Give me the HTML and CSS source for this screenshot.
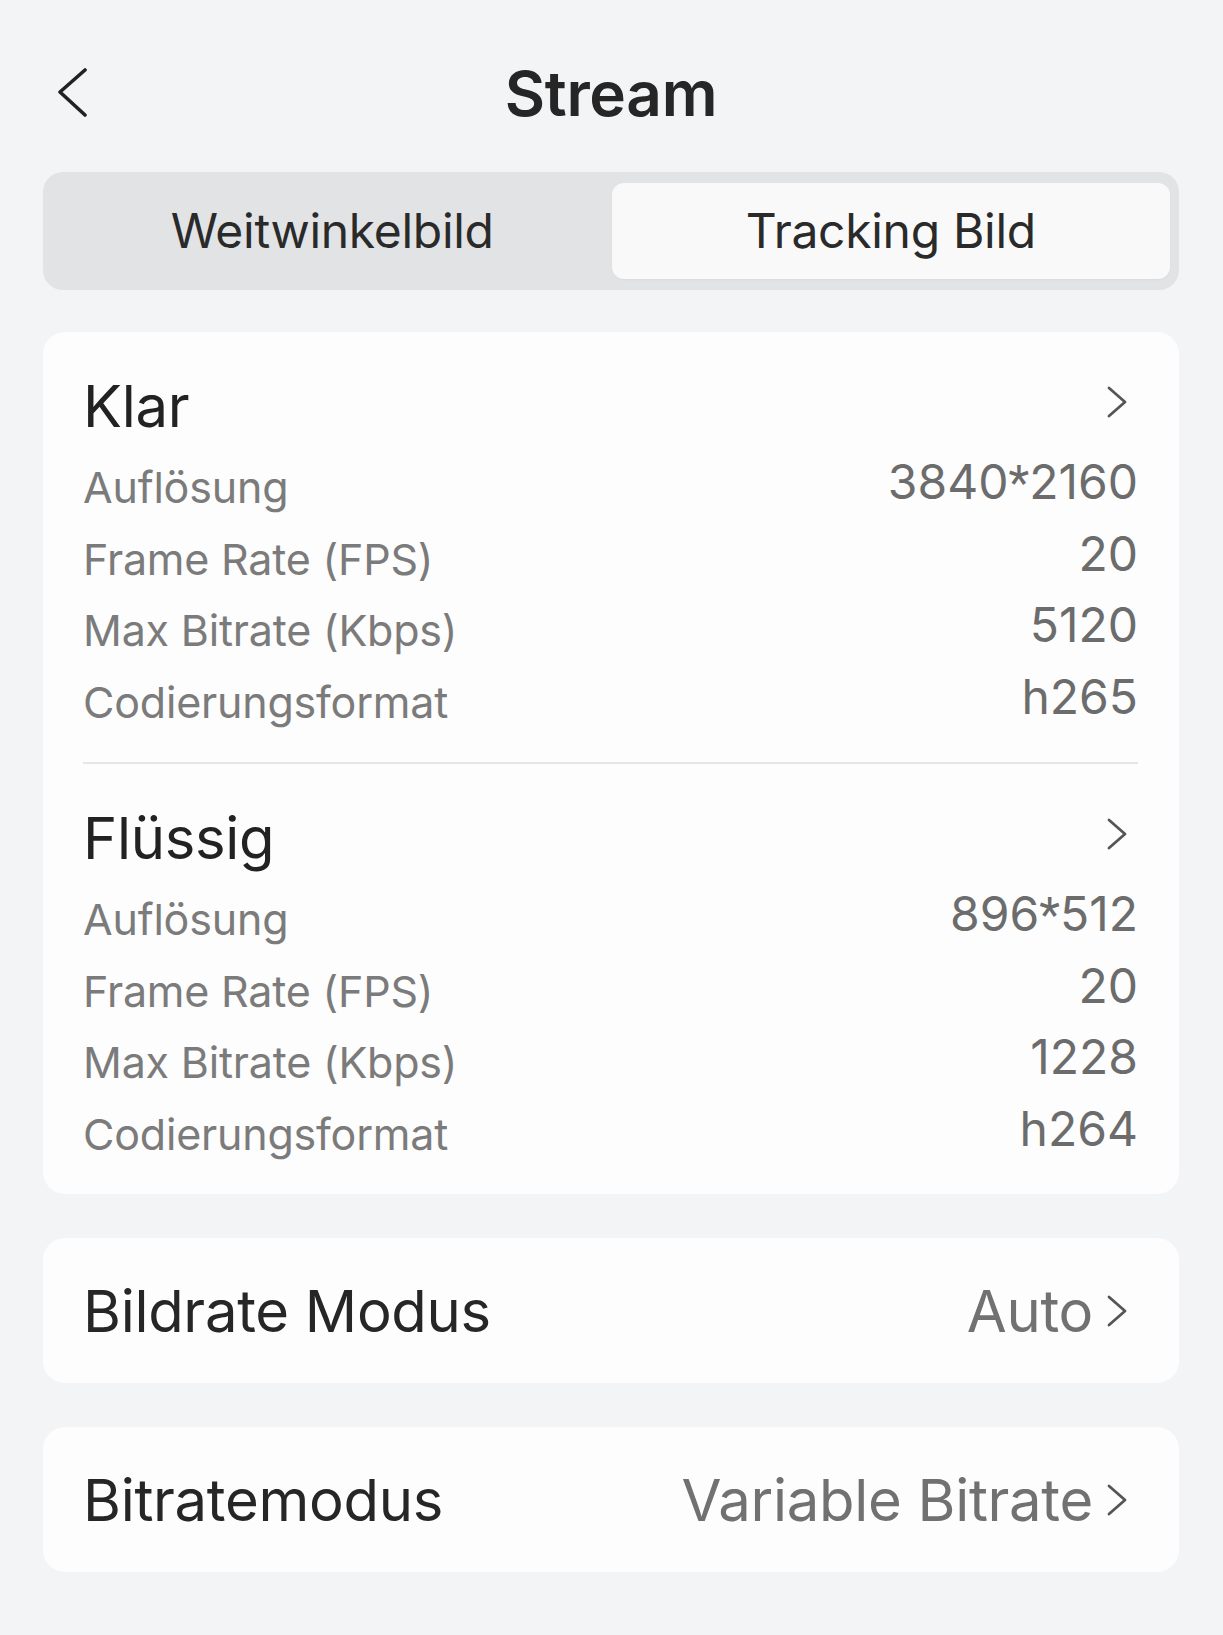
FILE: index.html
```html
<!DOCTYPE html>
<html lang="de">
<head>
  <meta charset="UTF-8">
  <title>Stream</title>
  <meta name="viewport" content="width=device-width, initial-scale=1.0">
  <link rel="stylesheet" href="styles.css">
</head>
<body>
  <!-- Header -->
  <div class="header">
    <button class="backBtn" aria-label="Zurück">
      <svg width="30" height="50" viewBox="0 0 30 50"><path d="M27 2 L2 24 L27 47" fill="none" stroke="#222" stroke-width="3.6" stroke-linecap="round" stroke-linejoin="round"/></svg>
    </button>
    <h1 class="title">Stream</h1>
  </div>

  <!-- Segmented control -->
  <div class="segmented">
    <div class="segment">Weitwinkelbild</div>
    <div class="segment active">Tracking Bild</div>
  </div>

  <!-- Stream profiles -->
  <div class="card">
    <div class="section">
      <div class="sectionHead">
        <span class="sectionTitle">Klar</span>
        <svg class="chevron" width="20" height="32" viewBox="0 0 20 32"><path d="M2 2 L18 16 L2 30" fill="none" stroke="#555" stroke-width="2.8" stroke-linecap="round" stroke-linejoin="round"/></svg>
      </div>
      <div class="row"><span class="label">Auflösung</span><span class="value">3840<span class="star">*</span>2160</span></div>
      <div class="row"><span class="label">Frame Rate (FPS)</span><span class="value">20</span></div>
      <div class="row"><span class="label">Max Bitrate (Kbps)</span><span class="value">5120</span></div>
      <div class="row"><span class="label">Codierungsformat</span><span class="value">h265</span></div>
    </div>
    <div class="divider"></div>
    <div class="section">
      <div class="sectionHead">
        <span class="sectionTitle">Flüssig</span>
        <svg class="chevron" width="20" height="32" viewBox="0 0 20 32"><path d="M2 2 L18 16 L2 30" fill="none" stroke="#555" stroke-width="2.8" stroke-linecap="round" stroke-linejoin="round"/></svg>
      </div>
      <div class="row"><span class="label">Auflösung</span><span class="value">896<span class="star">*</span>512</span></div>
      <div class="row"><span class="label">Frame Rate (FPS)</span><span class="value">20</span></div>
      <div class="row"><span class="label">Max Bitrate (Kbps)</span><span class="value">1228</span></div>
      <div class="row"><span class="label">Codierungsformat</span><span class="value">h264</span></div>
    </div>
  </div>

  <!-- Modes -->
  <div class="card optionCard">
    <span class="optionName">Bildrate Modus</span>
    <span class="optionValue">Auto</span>
    <svg class="chevron" width="20" height="32" viewBox="0 0 20 32"><path d="M2 2 L18 16 L2 30" fill="none" stroke="#555" stroke-width="2.8" stroke-linecap="round" stroke-linejoin="round"/></svg>
  </div>

  <div class="card optionCard">
    <span class="optionName">Bitratemodus</span>
    <span class="optionValue">Variable Bitrate</span>
    <svg class="chevron" width="20" height="32" viewBox="0 0 20 32"><path d="M2 2 L18 16 L2 30" fill="none" stroke="#555" stroke-width="2.8" stroke-linecap="round" stroke-linejoin="round"/></svg>
  </div>
</body>
</html>
```

FILE: styles.css
```css
/* Base */
body {
  margin: 0;
  padding: 0 44px 60px 43px;
  background: #f3f4f6;
  font-family: Inter, "Noto Sans", sans-serif;
  color: #222;
}

/* Header */
.header {
  position: relative;
  height: 80px;
  padding-top: 54px;
  margin-bottom: 38px;
  display: flex;
  align-items: center;
  justify-content: center;
}
.backBtn {
  position: absolute;
  left: 15px;
  top: 68px;
  padding: 0;
  border: none;
  background: none;
  cursor: pointer;
}
.backBtn svg { display: block; }
.title {
  margin: 0;
  font-size: 62px;
  font-weight: 600;
  line-height: 80px;
  letter-spacing: -0.3px;
  color: #262626;
}

/* Segmented control */
.segmented {
  display: grid;
  grid-template-columns: 1fr 1fr;
  height: 96px;
  padding: 11px 9px 11px 10px;
  background: #e2e3e5;
  border-radius: 20px;
  margin-bottom: 42px;
}
.segment {
  text-align: center;
  font-size: 48px;
  line-height: 96px;
  letter-spacing: -0.3px;
  color: #2a2a2a;
  border-radius: 12px;
}
.segment.active {
  background: #f9f9f9;
  box-shadow: 0 1px 2px rgba(0,0,0,0.04);
}

/* Cards */
.card {
  background: #fdfdfd;
  border-radius: 22px;
  padding: 0 41px 0 40px;
  margin-bottom: 44px;
}
.section {
  padding: 39px 0 24px;
}
.sectionHead {
  display: flex;
  align-items: center;
  justify-content: space-between;
  height: 70px;
  margin-bottom: 11px;
}
.sectionTitle {
  font-size: 58px;
  line-height: 70px;
  letter-spacing: -0.3px;
  color: #222;
}
.chevron {
  display: block;
  flex-shrink: 0;
  margin-right: 11px;
}
.sectionHead .chevron { margin-top: -8px; }
.row {
  display: flex;
  justify-content: space-between;
  align-items: flex-start;
  height: 71.5px;
}
.label {
  font-size: 43px;
  line-height: 71.5px;
  letter-spacing: -0.2px;
  color: #7b7b7b;
}
.value {
  font-size: 48px;
  line-height: 60px;
  color: #6c6c6c;
}
.star {
  font-family: Roboto, sans-serif;
}
.divider {
  height: 2px;
  background: #e6e6e6;
}

/* Option rows */
.optionCard {
  display: flex;
  align-items: center;
  height: 145px;
}
.optionName {
  flex: 1;
  font-size: 58px;
  line-height: 70px;
  letter-spacing: -0.3px;
  color: #262626;
}
.optionValue {
  font-size: 58px;
  line-height: 70px;
  letter-spacing: -0.3px;
  color: #717171;
  margin-right: 14px;
}
```
